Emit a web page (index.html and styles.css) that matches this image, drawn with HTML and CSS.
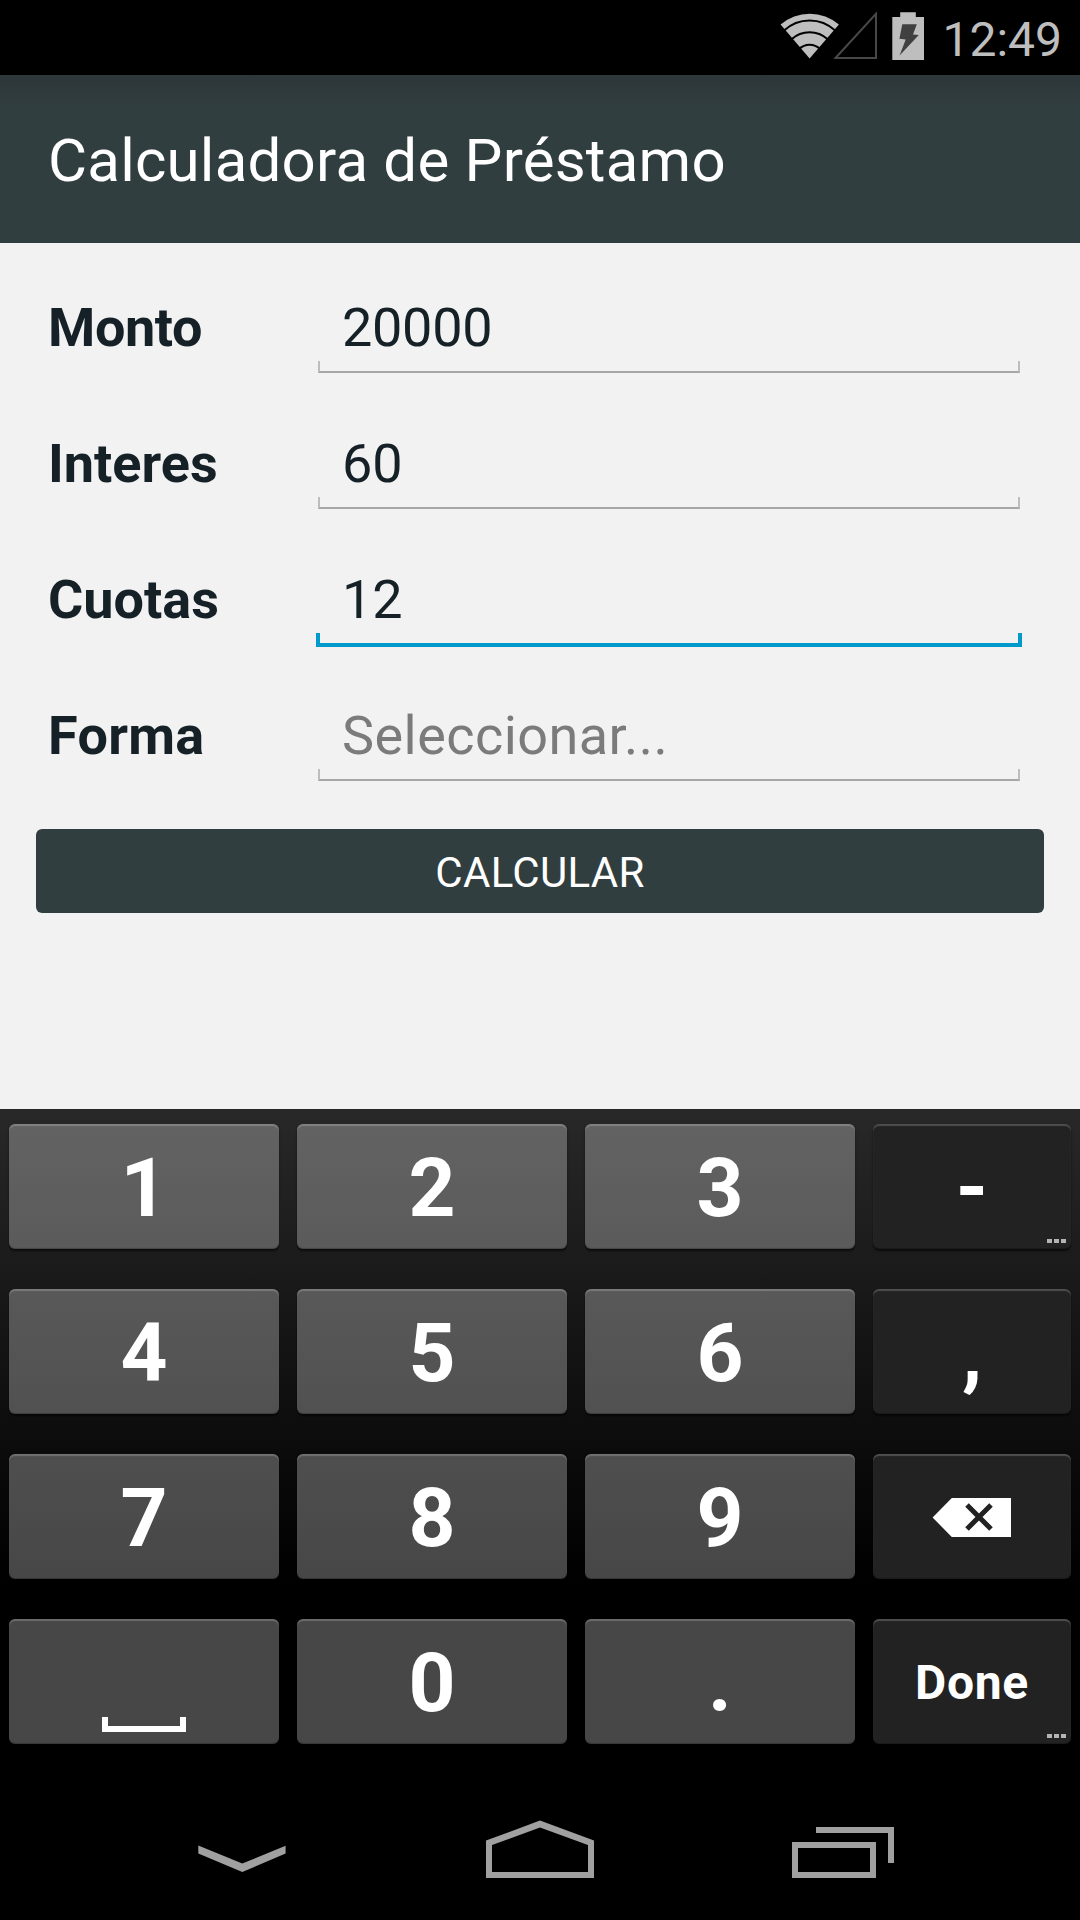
FILE: index.html
```html
<!DOCTYPE html>
<html lang="es">
<head>
<meta charset="utf-8">
<title>Calculadora de Préstamo</title>
<link rel="stylesheet" href="styles.css">
</head>
<body>
<div class="screen">
  <header class="status">
    <svg class="status-icons" width="165" height="75" viewBox="775 0 165 75">
      <path fill="#bebebe" d="M809.6 58.4 780.6 24.6A44.3 44.3 0 0 1 838.9 24.6Z"/>
      <g fill="none" stroke="#000" stroke-width="2">
        <path d="M784 30.5A37.5 37.5 0 0 1 835.2 30.5"/>
        <path d="M791.5 39.3A26.6 26.6 0 0 1 827.7 39.3"/>
        <path d="M799.2 49A14.6 14.6 0 0 1 820 49"/>
      </g>
      <path fill="none" stroke="#484848" stroke-width="2" d="M835.5 58 876 13.8V58Z"/>
      <path fill="#bebebe" d="M892.3 17H900.2V12.2H915.8V17H924V60H892.3Z"/>
      <path fill="#404040" d="M902.3 24.3H916.8L913 34.6 918.8 35 899.6 55.4 905.7 39.4 899.4 38.8Z"/>
    </svg>
    <span class="clock">12:49</span>
  </header>
  <div class="action-bar"><h1 class="title">Calculadora de Préstamo</h1></div>
  <main class="form">
    <div class="row"><span class="label tight">Monto</span><div class="field amount">20000</div></div>
    <div class="row"><span class="label">Interes</span><div class="field">60</div></div>
    <div class="row"><span class="label">Cuotas</span><div class="field focused">12</div></div>
    <div class="row"><span class="label loose">Forma</span><div class="field hint">Seleccionar...</div></div>
    <button class="submit" type="button">CALCULAR</button>
  </main>
  <section class="keyboard">
    <div class="key">1</div><div class="key">2</div><div class="key">3</div>
    <div class="key dark dash">-<span class="more"><i></i><i></i><i></i></span></div>
    <div class="key">4</div><div class="key">5</div><div class="key">6</div>
    <div class="key dark">,</div>
    <div class="key">7</div><div class="key">8</div><div class="key">9</div>
    <div class="key dark icon">
      <svg width="198" height="125" viewBox="873 1454 198 125">
        <path fill="#fff" d="M932.6 1517.5 951.8 1498H1011V1537H951.8Z"/>
        <path stroke="#222" stroke-width="5" d="M967 1505 991 1529M991 1505 967 1529"/>
      </svg>
    </div>
    <div class="key icon">
      <svg width="270" height="125" viewBox="9 1619 270 125">
        <path fill="#fff" d="M102 1717H108V1726H180V1717H186V1732H102Z"/>
      </svg>
    </div>
    <div class="key">0</div><div class="key">.</div>
    <div class="key dark done">Done<span class="more"><i></i><i></i><i></i></span></div>
  </section>
  <nav class="nav">
    <svg width="88" height="27" viewBox="198 1845 88 27"><path fill="#a0a0a0" d="M198.3 1845.5 242.3 1863.5 285.6 1845.8V1853.6L242.3 1872 198.3 1853.6Z"/></svg>
    <svg class="home" width="108" height="58" viewBox="486 1820 108 58"><path fill="#a0a0a0" fill-rule="evenodd" d="M486 1840.6 540 1820.6 594 1840.6V1878H486ZM492 1845V1872H588V1845L540 1827.6Z"/></svg>
    <svg width="102" height="51" viewBox="792 1827 102 51"><path fill="#a0a0a0" fill-rule="evenodd" d="M792 1842H876V1878H792ZM798 1848V1872H870V1848ZM816 1827H894V1863H888V1833H816Z"/></svg>
  </nav>
</div>
</body>
</html>
```
FILE: styles.css
```css
*,
*::after { box-sizing: border-box; }

body {
  margin: 0;
  background: #000;
  font-family: Roboto, "Liberation Sans", sans-serif;
}

.screen {
  display: flex;
  flex-direction: column;
  width: 1080px;
  height: 1920px;
  overflow: hidden;
}

.status {
  display: flex;
  align-items: center;
  justify-content: flex-end;
  height: 75px;
  padding-right: 18px;
  background: #000;
}

.status-icons { display: block; }

.clock {
  width: 122px;
  padding-top: 4px;
  color: #bebebe;
  font-size: 48px;
  line-height: 75px;
  text-align: right;
}

.action-bar {
  display: flex;
  align-items: center;
  height: 168px;
  padding: 2px 48px 0;
  background: linear-gradient(#2d3639, #313e40 34px, #313e40);
}

.title {
  margin: 0;
  color: #fff;
  font-size: 60px;
  font-weight: 400;
  letter-spacing: 0.22px;
  white-space: nowrap;
}

.form {
  height: 866px;
  padding-top: 16px;
  background: #f2f2f2;
}

.row {
  display: flex;
  height: 136px;
  padding-left: 48px;
  color: #152127;
  font-size: 54px;
  line-height: 137px;
}

.label {
  width: 268px;
  font-weight: 700;
}

.label.tight { letter-spacing: -0.4px; }
.label.loose { letter-spacing: 0.3px; }

.field {
  position: relative;
  width: 706px;
  height: 118px;
  padding-left: 26px;
}

.field.amount { letter-spacing: -0.3px; }

/* bracket-shaped underline */
.field::after {
  content: "";
  position: absolute;
  left: 2px;
  right: 2px;
  bottom: 4px;
  height: 12px;
  border: 2px solid #bdbdbd;
  border-top: 0;
  border-bottom-color: #a6a6a6;
}

.field.focused::after {
  left: 0;
  right: 0;
  bottom: 2px;
  height: 14px;
  border-color: #0099cc;
  border-width: 0 4px 4px;
}

.hint {
  color: #7b7b7b;
  letter-spacing: 0.45px;
}

.submit {
  display: block;
  width: 1008px;
  height: 84px;
  margin: 26px 36px 0;
  padding: 2px 0 0;
  border: 0;
  border-radius: 6px;
  background: #313e40;
  color: #fff;
  font-family: inherit;
  font-size: 42px;
  letter-spacing: 0.3px;
}

.keyboard {
  display: grid;
  grid-template-columns: 270px 270px 270px 198px;
  grid-auto-rows: 125px;
  gap: 40px 18px;
  height: 661px;
  padding: 15px 9px 0;
  background: linear-gradient(#282828, #000 475px);
}

.key {
  position: relative;
  display: flex;
  align-items: center;
  justify-content: center;
  padding-top: 3px;
  border-radius: 6px;
  background: rgba(255, 255, 255, 0.28);
  box-shadow: inset 0 2px 1px rgba(255, 255, 255, 0.2), inset 0 -1px 1px rgba(0, 0, 0, 0.25), 0 2px 2px rgba(0, 0, 0, 0.6);
  color: #fff;
  font-size: 82px;
  font-weight: 700;
}

.key.dark { background: #222; }
.key.icon { padding: 0; }
.key.dash { padding-top: 1px; }

.key.done {
  padding-top: 2px;
  font-size: 48px;
  letter-spacing: 0.7px;
}

.more {
  position: absolute;
  right: 5px;
  bottom: 6px;
  display: flex;
  gap: 2px;
}

.more i {
  width: 5px;
  height: 4px;
  background: #b4b4b4;
}

.nav {
  display: flex;
  align-items: flex-end;
  height: 150px;
  padding: 0 186px 42px 198px;
  background: #000;
}

.nav svg { flex: none; }

.nav svg:first-child {
  margin-bottom: 6px;
}

.nav .home { margin: 0 198px 0 200px; }
```
